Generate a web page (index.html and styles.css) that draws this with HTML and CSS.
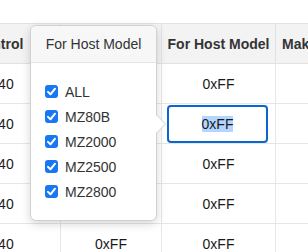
FILE: index.html
```
<!DOCTYPE html>
<html lang="en">

<head>
    <meta charset="UTF-8">
    <title>Host Model Filter</title>
    <link rel="stylesheet" href="styles.css">
</head>

<body>
    <div class="grid-wrap">
        <table class="grid">
            <colgroup>
                <col class="c-control">
                <col class="c-value">
                <col class="c-host">
                <col class="c-maker">
            </colgroup>
            <thead>
                <tr>
                    <th>Control</th>
                    <th></th>
                    <th>For Host Model</th>
                    <th>Maker</th>
                </tr>
            </thead>
            <tbody>
                <tr>
                    <td>0x40</td>
                    <td></td>
                    <td>0xFF</td>
                    <td></td>
                </tr>
                <tr>
                    <td>0x40</td>
                    <td></td>
                    <td class="editing">
                        <div class="editor"><span class="selected">0xFF</span></div>
                    </td>
                    <td></td>
                </tr>
                <tr>
                    <td>0x40</td>
                    <td></td>
                    <td>0xFF</td>
                    <td></td>
                </tr>
                <tr>
                    <td>0x40</td>
                    <td></td>
                    <td>0xFF</td>
                    <td></td>
                </tr>
                <tr>
                    <td>0x40</td>
                    <td>0xFF</td>
                    <td>0xFF</td>
                    <td></td>
                </tr>
            </tbody>
        </table>
    </div>

    <!-- Host model filter popover -->
    <div class="popover">
        <div class="popover-title">For Host Model</div>
        <ul class="popover-body">
            <li><span class="check"><svg viewBox="0 0 14 14"><path d="M3.2 7.4 L5.9 10 L10.8 4" /></svg></span>ALL</li>
            <li><span class="check"><svg viewBox="0 0 14 14"><path d="M3.2 7.4 L5.9 10 L10.8 4" /></svg></span>MZ80B</li>
            <li><span class="check"><svg viewBox="0 0 14 14"><path d="M3.2 7.4 L5.9 10 L10.8 4" /></svg></span>MZ2000</li>
            <li><span class="check"><svg viewBox="0 0 14 14"><path d="M3.2 7.4 L5.9 10 L10.8 4" /></svg></span>MZ2500</li>
            <li><span class="check"><svg viewBox="0 0 14 14"><path d="M3.2 7.4 L5.9 10 L10.8 4" /></svg></span>MZ2800</li>
        </ul>
    </div>
</body>

</html>
```

FILE: styles.css
```
body {
    margin: 0;
    font-family: 'Liberation Sans', Arial, sans-serif;
    background: white;
    width: 308px;
    height: 252px;
    overflow: hidden;
}

.grid-wrap {
    padding-top: 23px;
    overflow: hidden;
}

.grid {
    border-collapse: collapse;
    table-layout: fixed;
    margin-left: -64px;
    width: 440px;
    font-size: 14px;
}

.c-control {
    width: 124px;
}

.c-value {
    width: 101px;
}

.c-host {
    width: 114px;
}

.c-maker {
    width: 101px;
}

.grid th {
    height: 39px;
    padding: 0 4px;
    background: #f3f3f3;
    color: #333;
    font-weight: bold;
    text-align: center;
    white-space: nowrap;
    overflow: hidden;
    border: 1px solid #e2e2e2;
}

.grid th:last-child {
    text-align: left;
    padding-left: 6px;
}

.grid td {
    height: 39px;
    padding: 0;
    color: #1a1a1a;
    text-align: center;
    border: 1px solid #e6e6e6;
}

.grid td.editing {
    padding: 0 7px 0 5px;
}

.editor {
    height: 34px;
    border: 2px solid #0b66d0;
    border-radius: 4px;
    display: flex;
    align-items: center;
    justify-content: center;
    background: white;
}

.selected {
    background: #b4d5fe;
}

/* popover */
.popover {
    position: absolute;
    left: 30px;
    top: 25px;
    width: 125px;
    height: 194px;
    background: white;
    border: 1px solid #d0d0d0;
    border-radius: 6px;
    box-shadow: 0 3px 10px rgba(0, 0, 0, 0.16);
    color: #333;
    font-size: 14px;
}

.popover::before,
.popover::after {
    content: "";
    position: absolute;
    top: 88px;
    border-style: solid;
    border-color: transparent;
}

.popover::before {
    right: -10px;
    border-width: 10px 0 10px 10px;
    border-left-color: #d0d0d0;
}

.popover::after {
    right: -9px;
    top: 89px;
    border-width: 9px 0 9px 9px;
    border-left-color: white;
}

.popover-title {
    height: 36px;
    display: flex;
    align-items: center;
    justify-content: center;
    background: #f7f7f7;
    border-bottom: 1px solid #e4e4e4;
    border-radius: 6px 6px 0 0;
}

.popover-body {
    list-style: none;
    margin: 0;
    padding: 16px 0 0 14px;
}

.popover-body li {
    height: 25px;
    display: flex;
    align-items: center;
    gap: 7px;
}

.check {
    width: 13px;
    height: 13px;
    border-radius: 3px;
    background: #1877f2;
    display: flex;
}

.check svg {
    width: 13px;
    height: 13px;
    fill: none;
    stroke: white;
    stroke-width: 2.2;
    stroke-linecap: round;
    stroke-linejoin: round;
}
```
